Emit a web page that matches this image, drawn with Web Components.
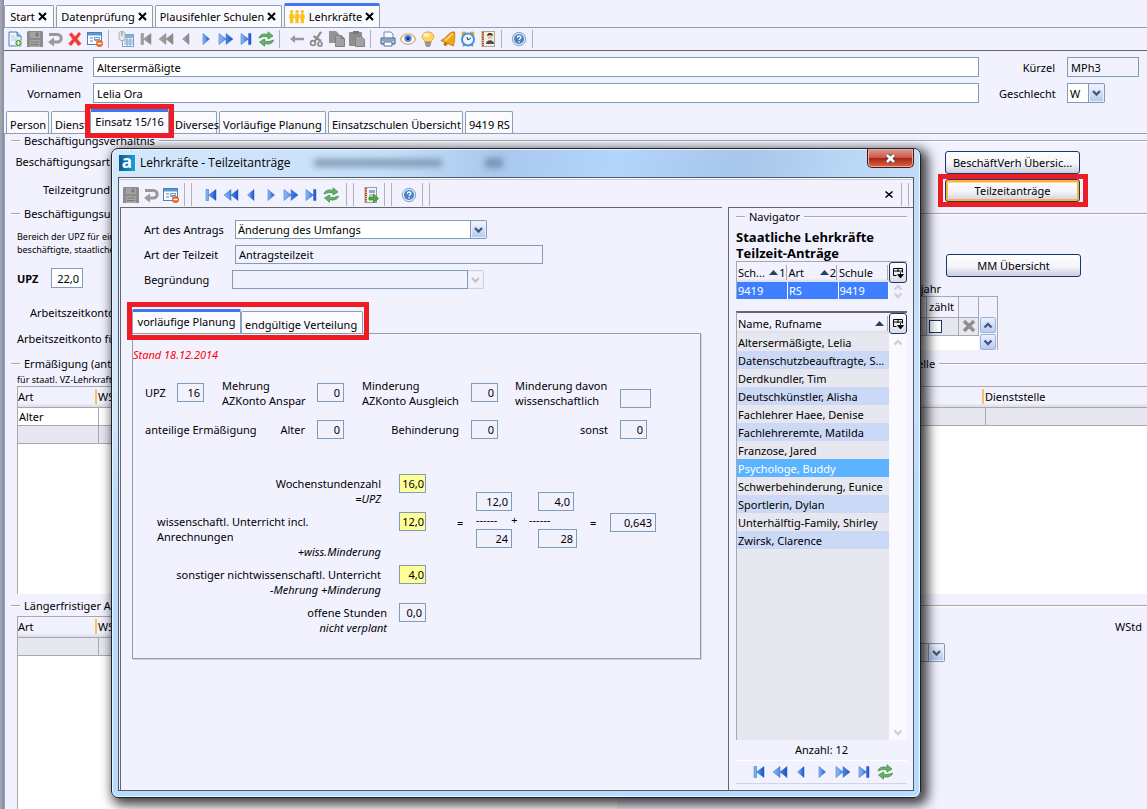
<!DOCTYPE html>
<html lang="de">
<head>
<meta charset="utf-8">
<title>Lehrkräfte</title>
<style>
  html, body { margin: 0; height: 100%; }
  body {
    font: 11px/15px "Noto Sans", "Open Sans", sans-serif; color: #000; background: #f2f2ff; overflow: hidden;
    --bg: #f2f2ff; --line: #7f9db9; --rule: #a8a8b0; --red: #ee1c24;
  }
</style>
</head>
<body>
<teacher-app></teacher-app>
<script>
const ICONS = {
  new: '<path d="M2 1h8l4 4v10H2z" fill="#eef5fc" stroke="#4580b5"/><path d="M10 1v4h4" fill="#a9cbe8" stroke="#4580b5"/><path d="M4 5h4M4 7h7M4 9h6" stroke="#b5d2ec"/><circle cx="11.500" cy="12" r="3.500" fill="#4da23c" stroke="#fff" stroke-width=".6"/><path d="M9.500 12h4M11.500 10v4" stroke="#fff" stroke-width="1.200"/>',
  save: '<path d="M0 1l1-1h14l1 1v15H0z" fill="#8c8c8c"/><path d="M3 1h10v6H3zM3 9h10v7H3z" fill="#a4a4a4"/><path d="M9 2h2v3H9zM4 11h8M4 13.500h8" stroke="#7b7b7b" fill="#888"/>',
  undo: '<path d="M2 3.500h8.500a3.700 3.700 0 0 1 0 7.400H6" fill="none" stroke="#999" stroke-width="3"/><path d="M7 6.500v9L1 11z" fill="#999"/>',
  delete: '<path d="M2 3.500L4.500 1.500 8 5.500 12 1l2 2-3.600 4.700 4 5-2.900 2.300-3.700-4.500L4 15l-2.500-2.500L5.500 8z" fill="#ef3b34" stroke="#f8908c" stroke-width=".6"/>',
  form: '<rect x=".5" y="1.500" width="14" height="12" fill="#fff" stroke="#4c83bb"/><path d="M1 2h13v2.500H1z" fill="#5b96cf"/><path d="M3 7h3M3 10h3" stroke="#5687b8" stroke-width="1.200"/><path d="M7.500 6.500h5v2h-5zM7.500 9.500h3" fill="none" stroke="#6a99c7"/><circle cx="12.500" cy="12.500" r="3.200" fill="#ee6a24" stroke="#d04c10" stroke-width=".5"/><path d="M10.500 12.500h4" stroke="#fff" stroke-width="1.400"/>',
  list: '<rect x="4.500" y="3.500" width="11" height="12" fill="#fff" stroke="#7da3cc"/><path d="M5 4h10v3H5z" fill="#86b0dc"/><path d="M6 9h9M6 11h9M6 13h9M9 7v8M12 7v8" stroke="#7da3cc"/><rect x="1" y=".5" width="6" height="9" rx="2" fill="#e6e6e6" stroke="#999" stroke-width=".7"/><path d="M4 1v4" stroke="#888"/>',
  first: '<path d="M3 2.500h2.500v11H3zM13 2.500v11L5.500 8z" class="n"/>',
  rew: '<path d="M8 2.500v11L1 8zM15 2.500v11L8 8z" class="n"/>',
  prev: '<path d="M11 2.500v11L4.500 8z" class="n"/>',
  next: '<path d="M5 2.500v11L11.500 8z" class="n"/>',
  ffwd: '<path d="M1 2.500v11L8 8zM8 2.500v11L15 8z" class="n"/>',
  last: '<path d="M3 2.500v11L10.500 8zM10.500 2.500H13v11h-2.500z" class="n"/>',
  refresh: '<path d="M1 7C1.500 3.500 6 2 10 3.500V.8L15 5 10 8V6C7 5 4.500 5.500 1 7z" fill="#67b267" stroke="#2f8a3a" stroke-width=".7"/><path d="M15.500 9c-.5 3.500-5 5-9 3.500v2.700L1.500 11l5-3v2c3 1 5.500.5 9-1z" fill="#67b267" stroke="#2f8a3a" stroke-width=".7"/>',
  back: '<path d="M1 8l5-4v2.700h9v2.600H6V12z" fill="#999"/>',
  cut: '<path d="M12 .8L6 10M4.500 5L12 10" stroke="#8c8c8c" stroke-width="2.200" fill="none"/><circle cx="4" cy="12" r="2.400" fill="none" stroke="#8c8c8c" stroke-width="1.700"/><circle cx="11" cy="13" r="2" fill="none" stroke="#8c8c8c" stroke-width="1.700"/>',
  copy: '<path d="M0 0h7l3 3v9H0z" fill="#949494"/><path d="M6.500 4.500h6l3 3v8h-9z" fill="#a2a2a2" stroke="#828282"/><path d="M12 4.500v3h3" fill="none" stroke="#777"/>',
  paste: '<rect x="0" y="1" width="13" height="14" rx="1" fill="#8d8d8d"/><path d="M4 0h6v3H4z" fill="#777"/><path d="M6.500 5.500h6l3 3v7h-9z" fill="#a2a2a2" stroke="#828282"/>',
  print: '<path d="M4 1h7l2 2v5H4z" fill="#f8fbff" stroke="#7291b0"/><path d="M1 7h14v6H1z" fill="#b9cfe6" stroke="#3d5c7e"/><path d="M2 9h12" stroke="#5c7da1"/><path d="M4 11h8v4H4z" fill="#fff" stroke="#4f6e8e"/>',
  eye: '<ellipse cx="8" cy="8" rx="7.500" ry="5.300" fill="#eadbc9" stroke="#d5a67b"/><ellipse cx="8" cy="8.500" rx="6" ry="3.500" fill="#fff"/><circle cx="8" cy="7.500" r="3.600" fill="#4f84dc"/><circle cx="8" cy="7.500" r="1.500" fill="#122a5c"/>',
  bulb: '<path d="M8 .8a6 5 0 0 1 3.500 9V11h-7V9.800A6 5 0 0 1 8 .8z" fill="#ffd765" stroke="#e9a93a"/><ellipse cx="6.500" cy="4" rx="3" ry="2" fill="#fff4c8"/><path d="M5.500 11h5v3l-1 1.500h-3l-1-1.500z" fill="#9c9c9c" stroke="#666" stroke-width=".5"/>',
  bell: '<path d="M14.500 1C15.500 6 14 11 13.500 15L.8 9.500C6 8 7 2.500 13 .8z" fill="#efa61c" stroke="#b87208" stroke-width=".8"/><path d="M5 9.500C9 8 10 4 13 3" stroke="#ffe08a" stroke-width="1.500" fill="none"/><circle cx="5.500" cy="13" r="2" fill="#c57b0a"/>',
  clock: '<circle cx="4" cy="3" r="2.500" fill="#e0a03a"/><circle cx="12" cy="3" r="2.500" fill="#e0a03a"/><path d="M3 15l2-2M13 15l-2-2" stroke="#888" stroke-width="2"/><circle cx="8" cy="8.500" r="6" fill="#eef7ff" stroke="#4596d8" stroke-width="2"/><path d="M7 6l1 3 3-2" stroke="#333" fill="none"/>',
  book: '<rect x="2" y=".5" width="12.500" height="15" fill="#f4efe6" stroke="#b3a38f"/><path d="M3 1v14" stroke="#b64e28" stroke-width="2" stroke-dasharray="1.500 .7"/><circle cx="10" cy="5.500" r="2.500" fill="#f0bd8d"/><path d="M7 5c0-4 6-4 6 0-2-1.500-4-1.500-6 0z" fill="#3a2616"/><path d="M6 13c0-5 8-5 8 0z" fill="#4a4a55"/>',
  help: '<circle cx="8" cy="8" r="6.700" fill="#dfe9f6" stroke="#7ea2cc"/><circle cx="8" cy="8" r="5" fill="#4b81c5"/><path d="M6.300 6.700c0-2.300 3.500-2.200 3.500-.2 0 1.200-1.700 1.200-1.700 2.600M8.100 10v1.500" stroke="#fff" stroke-width="1.300" fill="none"/>',
  export: '<rect x="2" y=".5" width="11.500" height="15" fill="#f5f5f5" stroke="#9b9b9b"/><path d="M3 1v14" stroke="#b64e28" stroke-width="2" stroke-dasharray="1.500 .7"/><path d="M6 3h6v3H6z" fill="#84a8d8"/><path d="M6 8h4" stroke="#888"/><path d="M6 10h4.500V7L15.500 11.500l-5 4.300V13H6z" fill="#51a83e" stroke="#2b7a20" stroke-width=".7"/>',
  close: '<path d="M4.500 4.500l7 6M11.500 4.500l-7 6" stroke="#000" stroke-width="1.600"/>'
};

const svg = (name) => `<svg viewBox="0 0 16 16" width="16" height="16" aria-hidden="true">
  <defs><linearGradient id="g"><stop offset="0" stop-color="var(--n1,#8fc0f5)"/><stop offset="1" stop-color="var(--n2,#1550cc)"/></linearGradient></defs>${ICONS[name]}</svg>`;

const BASE = `*{box-sizing:border-box} button,input,select{font:inherit;color:inherit;margin:0}`;
const define = (name, css, html, after) => customElements.define(name, class extends HTMLElement {
  connectedCallback() {
    if (this.shadowRoot) return;
    const t = document.createElement('template');
    const a = (k, d = '') => this.getAttribute(k) ?? d;
    t.innerHTML = `<style>${BASE}${css}</style>${html(a, this)}`;
    this.attachShadow({ mode: 'open' }).append(t.content.cloneNode(true));
    after?.(this.shadowRoot, this);
  }
});

/* toolbar parts */
define('tool-button', `
  :host{display:block;flex:none;height:16px}
  :host([muted]){--n1:#a4a4a4;--n2:#888}
  button{display:block;width:16px;height:16px;padding:0;border:0;background:none}
  svg{display:block}
  .n{fill:url(#g);stroke:var(--n2,#2f66c8);stroke-width:.5}`,
  a => `<button type="button" aria-label="${a('label')}">${svg(a('icon'))}</button>`);

define('tool-sep', `
  :host{display:block;flex:none;width:1px;height:18px;background:#b0b0b8;margin:0 5px 0 1px}
  :host([double]){width:8px;height:23px;background:none;border:solid #b0b0b8;border-width:0 1px;margin:0 5px 0 1px}`,
  () => '');

define('record-nav', `
  :host{display:flex;gap:var(--nav-gap,4px)}`,
  (a, el) => {
    const m = el.hasAttribute('half') ? 'muted' : '';
    return `<tool-button icon="first" label="Erster" ${m}></tool-button><tool-button icon="rew" label="Seite zurück" ${m}></tool-button>
    <tool-button icon="prev" label="Zurück" ${m}></tool-button><tool-button icon="next" label="Weiter"></tool-button>
    <tool-button icon="ffwd" label="Seite vor"></tool-button><tool-button icon="last" label="Letzter"></tool-button>
    <tool-button icon="refresh" label="Aktualisieren"></tool-button>`;
  });

/* tabs */
define('tab-item', `
  :host{display:block;flex:none;width:var(--w);height:22px}
  :host([active]){height:24px}
  :host([marked]){position:relative;z-index:1;outline:5px solid var(--red)}
  .tab{display:flex;align-items:center;justify-content:center;gap:2px;width:100%;height:100%;
    border:1px solid #8ca0b4;border-bottom:0;border-radius:2px 2px 0 0;background:#fbfbff}
  :host([active]) .tab{border-top:3px solid #3d78f0}
  :host([low]) .tab{justify-content:flex-start;padding:4px 0 0 3px}
  button{border:0;padding:0;background:none;white-space:nowrap;line-height:15px}
  .x{width:11px;height:12px}
  .x svg{display:block;width:11px;height:11px}
  .tab>svg{margin-right:2px}
  :host([active]:not([icon])) .tab{padding-bottom:2px}`,
  a => `<div class="tab">${a('icon') ? '<svg width="16" height="15" viewBox="0 0 18 15" aria-hidden="true"><g fill="#fbc118"><circle cx="3" cy="2" r="1.800"/><circle cx="9" cy="2" r="1.800"/><circle cx="15" cy="2" r="1.800"/><path d="M1 4h4l1 5.500H4.800V15H1.200V9.500H0zM7 4h4l1 5.500h-1.200V15H7.200V9.500H6zM13 4h4l1 5.500h-1.200V15h-3.600V9.500H12z"/></g></svg>' : ''}
    <button type="button" role="tab"><slot></slot></button>
    ${a('closable', null) !== null ? '<button type="button" class="x" aria-label="Schließen"><svg viewBox="0 0 11 11"><path d="M2 2l7 7M9 2l-7 7" stroke="#000" stroke-width="2"/></svg></button>' : ''}</div>`);

/* form parts */
define('text-field', `
  :host{display:flex;align-items:var(--align,center);gap:var(--gap,12px)}
  label{width:var(--label,auto);text-align:var(--label-align,left);white-space:pre-line;flex:none}
  :host([bold]) label{font-weight:bold}
  input{flex:none;width:var(--w,27px);height:var(--h,19px);min-width:0;padding:0 3px;border:1px solid var(--line);border-radius:0;background:#fff;outline:0}
  :host([grow]) input{flex:1}
  :host([num]) input{text-align:right}
  input:read-only{background:var(--bg)}
  :host([hot]) input{background:#ffff99;padding:0 1px}`,
  (a, el) => `${a('label') ? `<label for="i">${a('label')}</label>` : ''}
    <input id="i" value="${a('value')}" ${a('name') ? `aria-label="${a('name')}"` : ''} ${el.hasAttribute('readonly') ? 'readonly' : ''}>`);

define('select-field', `
  :host{display:flex;align-items:center;gap:var(--gap,12px)}
  label{width:var(--label,auto);text-align:var(--label-align,left);flex:none}
  .box{display:flex;width:var(--w);height:var(--h,19px)}
  select{appearance:none;flex:1;min-width:0;height:100%;padding:0 2px;border:1px solid var(--line);border-radius:0;background:#fff;outline:0;opacity:1}
  .arrow{flex:none;width:16px;border:1px solid var(--line);border-left:0;border-radius:0 2px 2px 0;background:linear-gradient(#f4f7ff,#b3c6ef);box-shadow:inset 0 0 0 1px #e6edfb;display:flex;align-items:center;justify-content:center}
  select:disabled{background:var(--bg)}
  :host([disabled]) .arrow{background:#f2f2f8;border-color:#cfcfd8}
  :host([disabled]) path{stroke:#c4c4cc}
  :host([gray]) select{background:#e4e4ec}`,
  (a, el) => `${a('label') ? `<label for="s">${a('label')}</label>` : ''}
    <span class="box"><select id="s" ${a('label') ? '' : 'aria-label="Auswahl"'} ${el.hasAttribute('disabled') ? 'disabled' : ''}><option>${a('value')}</option></select>
    <span class="arrow"><svg width="9" height="8" viewBox="0 0 9 8"><path d="M1 2l3.500 3.500L8 2" fill="none" stroke="#42597f" stroke-width="2.400"/></svg></span></span>`);

define('push-button', `
  :host{display:block;width:135px;height:23px}
  button{width:100%;height:100%;padding:0 4px;border:1px solid #173a6b;border-radius:3px;background:linear-gradient(#fff,#f4f4fa 55%,#cdcdde);white-space:nowrap}
  :host([focus]) button{box-shadow:inset 0 0 0 2px #fbb13c, inset 0 3px 0 #fdd79a}`,
  () => `<button type="button"><slot></slot></button>`);

define('group-title', `
  :host{display:flex;align-items:center;gap:4px;height:13px;line-height:13px;white-space:nowrap}
  i{height:2px;border-top:1px solid var(--rule);border-bottom:1px solid #fff;width:9px}
  i+span+i{flex:1}`,
  () => `<i></i><span><slot></slot></span><i></i>`);

define('scroll-arrow', `
  :host{display:flex;align-items:center;justify-content:center;width:16px;height:16px;flex:none}
  :host([on]){border:1px solid #9db3dd;border-radius:2px;background:linear-gradient(#eaf0ff,#b9caf2)}
  button{display:flex;padding:0;border:0;background:none}
  path{stroke:#d0d0d4}
  :host([on]) path{stroke:#42597f}`,
  (a, el) => `<button type="button" aria-label="${el.hasAttribute('up') ? 'Nach oben' : 'Nach unten'}"><svg width="10" height="7" viewBox="0 0 10 7"><path d="${el.hasAttribute('up') ? 'M1.500 5.500L5 2l3.500 3.500' : 'M1.500 1.500L5 5l3.500-3.500'}" fill="none" stroke-width="2.400"/></svg></button>`);

define('column-button', `
  :host{display:block;width:18px;height:21px;flex:none}
  button{width:100%;height:100%;padding:0;display:flex;align-items:center;justify-content:center;border:1px solid #173a6b;border-radius:3px;background:linear-gradient(#fff,#dcdce8)}`,
  () => `<button type="button" aria-label="Spalten wählen"><svg width="12" height="12" viewBox="0 0 12 12"><path d="M1.500 8.500v-7h9v4M1.500 4h9M6 1.500V5M1.500 8.500h3" fill="none" stroke="#000"/><path d="M5.500 7.500h6l-3 3.500zM8.500 5v3" fill="#000" stroke="#000" stroke-width=".8"/></svg></button>`);

/* plain background table: col widths and cells come from attributes, "|" between cells and ";" between rows */
define('data-grid', `
  :host{display:block;border:solid var(--rule);border-width:1px 0 0 1px;background:#fff;min-height:var(--min)}
  table{width:100%;border-collapse:collapse;table-layout:fixed}
  th{height:20px;padding:0;font-weight:normal;text-align:left;background:linear-gradient(var(--bg) 80%,#dcdce8);overflow:hidden}
  th span{display:block;height:15px;line-height:15px;white-space:nowrap}
  th:first-child span{border-right:2px solid #fbc065;margin-right:1px}
  td{height:18px;padding:0 1px;border:solid var(--rule);border-width:1px 0 1px 1px;line-height:15px}
  td:first-child{border-left:0}
  .g td{background:#e7e7f0}`,
  a => `<table><colgroup><col style="width:${a('first')}"><col></colgroup><thead><tr>${a('head').split('|').map(c => `<th scope="col"><span>${c}</span></th>`).join('')}</tr></thead>
    <tbody>${a('rows').split(';').map(r => `<tr class="${r === '|' ? 'g' : ''}">${r.split('|').map(c => `<td>${c}</td>`).join('')}</tr>`).join('')}</tbody></table>`);

/* small table with a tick box */
define('count-grid', `
  :host{display:flex;width:150px;border-top:1px solid var(--rule);border-right:1px solid var(--rule);background:var(--bg)}
  table{flex:1;border-collapse:collapse;table-layout:fixed;background:#fff}
  th{height:20px;padding:0 0 0 2px;font-weight:normal;text-align:left;background:var(--bg);border-right:1px solid var(--rule)}
  td{height:18px;padding:0 2px;background:#e7e7f0;border:1px solid var(--rule)}
  tr.e td{border:0;background:#fff;height:15px}
  input{appearance:none;display:block;width:13px;height:13px;margin:0;border:1px solid #173a6b;background:#fff}
  svg{display:block;margin:auto}
  .s{display:flex;flex-direction:column;gap:1px;padding:20px 1px 0}`,
  () => `<table><colgroup><col><col style="width:32px"><col style="width:20px"></colgroup>
    <thead><tr><th></th><th scope="col">zählt</th><th></th></tr></thead>
    <tbody><tr><td></td><td><input type="checkbox" aria-label="zählt"></td><td><svg width="14" height="14" viewBox="0 0 14 14"><path d="M2 2l10 10M12 2L2 12" stroke="#8f8f8f" stroke-width="3.500"/></svg></td></tr>
    <tr class="e"><td colspan="3"></td></tr></tbody></table>
    <div class="s"><scroll-arrow up on></scroll-arrow><scroll-arrow on></scroll-arrow></div>`);

/* navigator column of the dialog */
define('record-navigator', `
  :host{display:flex;flex-direction:column;border:solid #66666c;border-width:1px 0 0 1px;padding:2px 6px 6px 7px;--nav-gap:5px}
  h2{margin:6px 0 0;font-size:13px;line-height:16px;white-space:nowrap;font-weight:bold;font-family:"Open Sans","Noto Sans",sans-serif}
  .grid{display:flex;border:solid var(--rule);border-width:1px 0 0 1px}
  .side{display:flex;flex-direction:column;width:18px;align-items:center}
  table{width:100%;border-collapse:collapse;table-layout:fixed}
  .wrap{flex:1;min-width:0}
  th{height:20px;padding:0 1px;font-weight:normal;text-align:left;background:linear-gradient(var(--bg) 80%,#dcdce8);white-space:nowrap}
  th div{display:flex;justify-content:space-between;align-items:center;border-right:1px solid var(--rule);height:15px;line-height:15px}
  td{height:18px;padding:0 1px;line-height:15px;white-space:nowrap}
  .one td{background:#3f7fff;color:#fff;border-right:1px solid #fff;height:17px}
  .all{flex:1;margin-top:12px;border-top:2px solid #66666c;background:#e7e7f0}
  .all .side{background:#fafafe}
  .all td{background:#e7e7f0}
  .all tr:nth-child(even) td{background:#ccd9f6}
  .all tr.sel td{background:#5cb3ff;color:#fff}
  .all scroll-arrow:last-child{margin-top:auto}
  .half{height:8px}
  p{margin:0;height:20px;line-height:20px;text-align:center}
  nav{display:flex;justify-content:center;align-items:center;height:24px;border-top:1px solid #fff;border-bottom:1px solid #d4d4e4}`,
  () => `<group-title>Navigator</group-title>
  <h2>Staatliche Lehrkräfte<br>Teilzeit-Anträge</h2>
  <div class="grid"><div class="wrap"><table>
    <thead><tr><th scope="col"><div>Sch... <span>⏶1</span></div></th><th scope="col"><div>Art <span>⏶2</span></div></th><th scope="col"><div>Schule</div></th></tr></thead>
    <tbody class="one"><tr><td>9419</td><td>RS</td><td>9419</td></tr></tbody></table></div>
    <div class="side"><column-button></column-button><scroll-arrow up class="half"></scroll-arrow><scroll-arrow class="half"></scroll-arrow></div></div>
  <div class="grid all"><div class="wrap"><table>
    <thead><tr><th scope="col"><div>Name, Rufname <span>⏶</span></div></th></tr></thead><tbody>
    ${['Altersermäßigte, Lelia', 'Datenschutzbeauftragte, S...', 'Derdkundler, Tim', 'Deutschkünstler, Alisha', 'Fachlehrer Haee, Denise', 'Fachlehreremte, Matilda', 'Franzose, Jared', 'Psychologe, Buddy', 'Schwerbehinderung, Eunice', 'Sportlerin, Dylan', 'Unterhälftig-Family, Shirley', 'Zwirsk, Clarence']
      .map(n => `<tr class="${n[0] === 'P' ? 'sel' : ''}"><td>${n}</td></tr>`).join('')}
    </tbody></table></div>
    <div class="side"><column-button></column-button><scroll-arrow up></scroll-arrow><scroll-arrow></scroll-arrow></div></div>
  <p>Anzahl: 12</p>
  <nav><record-nav></record-nav></nav>`,
  root => root.querySelectorAll('th span').forEach(s => {
    const order = s.textContent.slice(1);
    s.innerHTML = `<svg width="9" height="5" viewBox="0 0 9 5" aria-hidden="true"><path d="M0 5L4.500 0 9 5z" fill="#27405e"/></svg>${order}`;
    s.style.cssText = `display:flex;align-items:center;gap:1px;margin-right:${order ? 0 : 3}px`;
  }));

/* planning sheet: hours and the resulting fraction */
define('planning-sheet', `
  :host{display:block}
  .tabs{display:flex;align-items:flex-end;width:232px;height:28px;padding-bottom:2px;margin-bottom:-2px;position:relative;z-index:1;outline:5px solid var(--red)}
  .tabs tab-item[active]{--w:109px}
  .tabs tab-item:last-child{--w:122px}
  .pane{border:1px solid #8ca0b4;box-shadow:1px 1px 0 #cfd3e2;height:326px;padding:13px 12px 0}
  .date{margin:0 0 0 -12px;color:#f00;font-style:italic}
  .facts{display:grid;grid-template-columns:32px 45px 95px 45px 109px 44px 105px auto;row-gap:3px;align-items:center;margin-top:15px}
  .facts .wide{grid-column:1/4;display:flex;justify-content:space-between;align-items:center;padding-right:12px}
  .facts .end{text-align:right;padding-right:12px}
  .facts .low{margin-top:12px}
  .row2{height:37px}
  .work{display:flex;margin-top:26px}
  .rows{display:flex;flex-direction:column;gap:6px;width:281px;padding-left:12px}
  .row{display:flex;justify-content:space-between;gap:18px;align-items:flex-start}
  .row:last-child{gap:12px}
  .row>div{flex:1;padding-top:2px;text-align:right;white-space:nowrap}
  .row .l{text-align:left}
  em{display:block}
  .calc{display:flex;align-items:center;height:56px;margin:18px 0 0 31px}
  .frac{display:flex;flex-direction:column;width:53px}
  .frac span{display:flex;gap:14px;line-height:18px}
  .frac+.frac text-field{padding-left:9px}
  .eq{padding-top:4px}
  .calc>span.eq{width:19px}
  .calc>.frac~span.eq{width:20px;margin-left:8px}`,
  () => `<div class="tabs" role="tablist"><tab-item active>vorläufige Planung</tab-item><tab-item low>endgültige Verteilung</tab-item></div>
  <div class="pane">
    <p class="date">Stand 18.12.2014</p>
    <div class="facts">
      <span>UPZ</span><text-field num readonly name="UPZ" value="16"></text-field>
      <span>Mehrung<br>AZKonto Anspar</span><text-field num readonly name="Mehrung AZKonto Anspar" value="0"></text-field>
      <span>Minderung<br>AZKonto Ausgleich</span><text-field num readonly name="Minderung AZKonto Ausgleich" value="0"></text-field>
      <span>Minderung davon<br>wissenschaftlich</span><text-field class="low" num readonly name="Minderung davon wissenschaftlich" style="--w:31px"></text-field>
      <div class="wide row2"><span>anteilige Ermäßigung</span><span>Alter</span></div><text-field num readonly name="Alter" value="0"></text-field>
      <span class="end">Behinderung</span><text-field num readonly name="Behinderung" value="0"></text-field>
      <span class="end">sonst</span><text-field num readonly name="sonst" value="0"></text-field>
    </div>
    <div class="work">
      <div class="rows">
        <div class="row"><div>Wochenstundenzahl<em>=UPZ</em></div><text-field hot num name="Wochenstundenzahl" value="16,0"></text-field></div>
        <div class="row"><div><div class="l">wissenschaftl. Unterricht incl.<br>Anrechnungen</div><em>+wiss.Minderung</em></div><text-field hot num name="wissenschaftl. Unterricht" value="12,0"></text-field></div>
        <div class="row"><div>sonstiger nichtwissenschaftl. Unterricht<em>-Mehrung +Minderung</em></div><text-field hot num name="sonstiger Unterricht" value="4,0"></text-field></div>
        <div class="row"><div>offene Stunden<em>nicht verplant</em></div><text-field num readonly name="offene Stunden" value="0,0"></text-field></div>
      </div>
      <div class="calc">
        <span class="eq">=</span>
        <div class="frac"><text-field num readonly name="Zähler" value="12,0" style="--w:36px"></text-field><span><span>------</span>+</span><text-field num readonly name="Nenner" value="24" style="--w:36px"></text-field></div>
        <div class="frac"><text-field num readonly name="Zähler" value="4,0" style="--w:36px"></text-field><span>------</span><text-field num readonly name="Nenner" value="28" style="--w:39px"></text-field></div>
        <span class="eq">=</span>
        <text-field class="eq" num readonly name="Ergebnis" value="0,643" style="--w:46px"></text-field>
      </div>
    </div>
  </div>`);

/* floating window */
define('request-window', `
  :host{display:flex;flex-direction:column;border:1px solid #1c232c;border-radius:7px;padding:0 6px 6px;
    background:linear-gradient(#0000 40%,#b7dbfd 55%),linear-gradient(100deg,#d5e8fb 0,#c6dff9 30%,#a8c8ee 42%,#b4d5fa 55%,#a6c6ea 68%,#bcd9f7 82%,#cfe4fb);
    box-shadow:inset 0 0 0 1px #eaf5ff,4px 4px 12px 3px rgba(0,0,0,.75)}
  header{display:flex;align-items:center;height:28px;gap:5px;padding-left:1px}
  .logo{width:16px;height:16px;background:linear-gradient(90deg,#12568f,#12a3dc);color:#fff;font:bold 17px/13px "Open Sans",sans-serif;text-align:center}
  h1{margin:0;font-size:12px;line-height:16px;font-weight:normal;font-family:"Open Sans",sans-serif}
  .ghost{width:128px;height:8px;margin-left:18px;background:#5d7a94;filter:blur(3px);opacity:.65}
  .ghost+.ghost{width:18px;height:10px;margin-left:38px}
  .x{align-self:flex-start;margin-left:auto;width:47px;height:19px;padding:0;border:1px solid #4b1a1a;border-top:0;border-radius:0 0 5px 5px;background:linear-gradient(#dd9c90,#c9594a 48%,#ac2410 52%,#d8664c);box-shadow:inset 0 0 0 1px #eda99c}
  .x svg{display:block;margin:auto}
  .client{flex:1;display:flex;flex-direction:column;min-height:0;border:1px solid #4e5a68;background:var(--bg)}
  .bar{display:flex;align-items:center;gap:4px;height:29px;padding:3px 4px 0;border-top:1px solid #fff;box-shadow:inset 0 1px 0 #ccc8dc}
  .bar record-nav{padding:0 2px}
  .bar .end{margin-left:auto}
  .bar tool-sep:last-child{margin:0}
  .body{flex:1;display:flex;gap:6px;min-height:0;padding-left:1px}
  .form{flex:1;border:solid #66666c;border-width:1px 0 0 1px;padding:12px 21px 0 11px}
  .form>*{margin-left:12px}
  .rows{display:flex;flex-direction:column;gap:6px;--gap:0px}
  .form>planning-sheet{margin:18px 0 0 0}
  record-navigator{width:185px;flex:none}`,
  () => `<header><span class="logo" aria-hidden="true">a</span><h1>Lehrkräfte - Teilzeitanträge</h1><span class="ghost"></span><span class="ghost"></span>
    <button type="button" class="x" aria-label="Schließen"><svg width="13" height="11" viewBox="0 0 13 11"><path d="M3 2l7 7M10 2L3 9" stroke="#4b4b55" stroke-width="4.500"/><path d="M3 2l7 7M10 2L3 9" stroke="#fff" stroke-width="2.500"/></svg></button></header>
  <div class="client">
    <div class="bar">
      <tool-button icon="save" label="Speichern"></tool-button><tool-button icon="undo" label="Rückgängig"></tool-button><tool-button icon="form" label="Maske"></tool-button>
      <tool-sep double></tool-sep><record-nav></record-nav><tool-sep double></tool-sep>
      <tool-button icon="export" label="Export"></tool-button><tool-sep double></tool-sep>
      <tool-button icon="help" label="Hilfe"></tool-button><tool-sep double></tool-sep>
      <tool-button class="end" icon="close" label="Schließen"></tool-button><tool-sep double></tool-sep>
    </div>
    <div class="body">
      <div class="form">
        <div class="rows">
          <select-field label="Art des Antrags" value="Änderung des Umfangs" style="--label:91px;--w:252px"></select-field>
          <text-field label="Art der Teilzeit" value="Antragsteilzeit" readonly style="--label:91px;--w:308px"></text-field>
          <select-field label="Begründung" value="" disabled style="--label:88px;--w:252px"></select-field>
        </div>
        <planning-sheet></planning-sheet>
      </div>
      <record-navigator></record-navigator>
    </div>
  </div>`);

/* whole application */
define('teacher-app', `
  :host{display:flex;flex-direction:column;position:relative;height:100vh;min-height:809px;overflow:hidden;border-left:2px solid #a3a3a8;box-shadow:inset 2px 0 0 #8793b0;padding-left:2px}
  .tabs{display:flex;align-items:flex-end;gap:2px;height:28px;border-bottom:1px solid #8ca0b4;flex:none}
  .bar{display:flex;align-items:center;gap:4px;height:22px;padding-left:3px;border-bottom:1px solid #66666c;flex:none;box-sizing:content-box}
  .head{display:grid;grid-template-columns:1fr auto;gap:6px 20px;padding:6px 8px 0 6px;--label:71px;--label-align:right;--h:20px}
  .head .r{--label:56px;--w:72px}
  .head .sex{--w:38px}
  .tabs.sub{height:31px;padding-left:2px}
  .main{flex:1;display:flex;flex-direction:column;border-left:1px solid #8ca0b4;padding-left:6px}
  .sec{display:flex;justify-content:space-between}
  .a{height:60px}
  .labels{width:99px;text-align:right;white-space:nowrap;padding-top:7px}
  .labels div+div{margin-top:13px}
  .btns{width:209px;padding-top:4px}
  .btns>push-button{margin-left:7px}
  .mark{width:150px;border:5px solid var(--red);padding:0 3px 0 2px}
  .b{height:137px}
  .notes{width:180px;padding:10px 0 0 6px;white-space:nowrap;overflow:hidden}
  .notes small,.c1 small{display:block;font-size:9px;line-height:13px}
  .notes text-field{margin:12px 0 0}
  .notes .k1{margin:17px 0 0 13px}.notes .k2{margin-top:11px}
  .side{width:299px;padding-top:34px}
  .side push-button{margin-left:98px}
  .side div{width:93px;text-align:right;line-height:15px;padding-top:4px}
  .c{display:grid;grid-template-columns:1fr 253px}
  .c1 small{margin:3px 0 0 6px}
  data-grid{margin-left:6px}
  .c2 data-grid{margin:16px 0 0}
  .rest{flex:1}
  .d{display:flex;flex-direction:column}
  .d data-grid{flex:1;width:600px;margin-top:4px}
  .full{margin-top:5px}
  .w{text-align:right;line-height:15px;margin:7px 5px 0 0}
  .e select-field{margin:9px 0 0;--w:51px}
  request-window{position:absolute;left:109px;right:226px;top:148px;bottom:11px}`,
  () => `<div class="tabs" role="tablist">
    <tab-item closable style="--w:50px">Start</tab-item><tab-item closable style="--w:97px">Datenprüfung</tab-item>
    <tab-item closable style="--w:127px">Plausifehler Schulen</tab-item><tab-item closable active icon="p" style="--w:96px">Lehrkräfte</tab-item></div>
  <div class="bar">
    <tool-button icon="new" label="Neu"></tool-button><tool-button icon="save" label="Speichern"></tool-button><tool-button icon="undo" label="Rückgängig"></tool-button><tool-button icon="delete" label="Löschen"></tool-button><tool-button icon="form" label="Maske"></tool-button>
    <tool-sep></tool-sep><tool-button icon="list" label="Liste"></tool-button><record-nav half></record-nav>
    <tool-sep></tool-sep><tool-button icon="back" label="Zurück"></tool-button><tool-button icon="cut" label="Ausschneiden"></tool-button><tool-button icon="copy" label="Kopieren"></tool-button><tool-button icon="paste" label="Einfügen"></tool-button>
    <tool-sep></tool-sep><tool-button icon="print" label="Drucken"></tool-button><tool-button icon="eye" label="Ansicht"></tool-button><tool-button icon="bulb" label="Hinweis"></tool-button><tool-button icon="bell" label="Meldung"></tool-button><tool-button icon="clock" label="Termin"></tool-button><tool-button icon="book" label="Adressbuch"></tool-button>
    <tool-sep></tool-sep><tool-button icon="help" label="Hilfe"></tool-button><tool-sep></tool-sep></div>
  <div class="head">
    <text-field grow label="Familienname" value="Altersermäßigte"></text-field><text-field class="r" readonly label="Kürzel" value="MPh3"></text-field>
    <text-field grow label="Vornamen" value="Lelia Ora"></text-field><select-field class="r sex" label="Geschlecht" value="W"></select-field></div>
  <div class="tabs sub" role="tablist">
    <tab-item low style="--w:43px">Person</tab-item><tab-item low style="--w:37px">Dienst</tab-item><tab-item active marked style="--w:79px">Einsatz 15/16</tab-item>
    <tab-item low style="--w:46px">Diverses</tab-item><tab-item low style="--w:107px">Vorläufige Planung</tab-item><tab-item low style="--w:135px">Einsatzschulen Übersicht</tab-item><tab-item low style="--w:48px">9419 RS</tab-item></div>
  <div class="main">
    <group-title>Beschäftigungsverhältnis</group-title>
    <div class="sec a"><div class="labels"><div>Beschäftigungsart</div><div>Teilzeitgrund</div></div>
      <div class="btns"><push-button>BeschäftVerh Übersic...</push-button><div class="mark"><push-button focus>Teilzeitanträge</push-button></div></div></div>
    <group-title>Beschäftigungsumfang</group-title>
    <div class="sec b"><div class="notes"><small>Bereich der UPZ für eine</small><small>beschäftigte, staatliche</small>
        <text-field bold num label="UPZ" value="22,0" style="--label:22px;--w:32px;--h:20px"></text-field>
        <div class="k1">Arbeitszeitkonto</div><div class="k2">Arbeitszeitkonto für</div></div>
      <div class="side"><push-button>MM Übersicht</push-button><div>Schuljahr</div><count-grid></count-grid></div></div>
    <div class="c">
      <div class="c1"><group-title>Ermäßigung (anteilig)</group-title><small>für staatl. VZ-Lehrkraft:</small>
        <data-grid first="80px" head="Art|WStd" rows="Alter|;|" style="--min:208px"></data-grid></div>
      <div class="c2"><group-title>Stelle</group-title>
        <data-grid first="90px" head="&nbsp;|Dienststelle" rows="|" style="--min:208px"></data-grid></div></div>
    <group-title class="full">Längerfristiger Ausgleich</group-title>
    <div class="c rest"><div class="d"><data-grid first="80px" head="Art|WStd" rows="|"></data-grid></div>
      <div class="e"><div class="w">WStd</div><select-field gray></select-field></div></div>
  </div>
  <request-window role="dialog"></request-window>`);
</script>
</body>
</html>
